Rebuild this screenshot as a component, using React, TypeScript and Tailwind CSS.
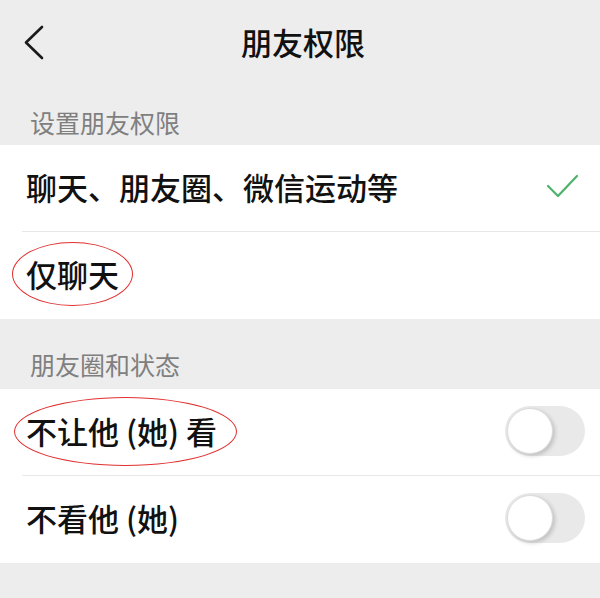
const font = {
  fontFamily: '"Noto Sans CJK SC", "Noto Sans", sans-serif',
};

function Toggle() {
  return (
    <div className="w-[80px] h-[50px] rounded-full bg-[#e9e9e9] p-[2px] flex items-center -mt-[3px]">
      <div className="w-[46px] h-[46px] rounded-full bg-white border border-[#dcdcdc] shadow-[2px_2px_4px_rgba(0,0,0,0.18)]" />
    </div>
  );
}

function Row({
  label,
  right,
  divider,
  circle,
}: {
  label: string;
  right?: React.ReactNode;
  divider?: boolean;
  circle?: string;
}) {
  return (
    <div className="relative h-[87px] flex items-center pl-[26px] pr-[15px]">
      <div className="relative -mt-[3px]">
        <span className="text-[31px] leading-[40px] font-medium text-[#111]">{label}</span>
        {circle && <div className={`absolute border-[1.5px] border-[#e0302f] rounded-[50%] ${circle}`} />}
      </div>
      <div className="ml-auto flex items-center">{right}</div>
      {divider && <div className="absolute bottom-0 left-[22px] right-0 h-px bg-[#e8e8e8]" />}
    </div>
  );
}

export default function App() {
  return (
    <div className="w-[600px] h-[598px] bg-[#ededed] overflow-hidden" style={font}>
      <div className="relative h-[86px] flex items-center justify-center">
        <svg className="absolute left-[22px] top-[24px]" width="26" height="38" viewBox="0 0 26 38">
          <polyline points="20,3 4,18.5 20,34" fill="none" stroke="#1a1a1a" strokeWidth="2.6" strokeLinecap="round" strokeLinejoin="round" />
        </svg>
        <span className="text-[31px] font-medium text-[#111] pl-[6px] -mt-[2px]">朋友权限</span>
      </div>

      <div className="h-[59px] pt-[21px] pl-[30px]">
        <span className="block text-[25px] leading-[30px] text-[#7f7f7f]">设置朋友权限</span>
      </div>

      <div className="bg-white">
        <Row
          label="聊天、朋友圈、微信运动等"
          divider
          right={
            <svg width="36" height="28" viewBox="0 0 36 28" className="mr-[4px] -mt-[3px]">
              <polyline points="3,13 13,23 32,3" fill="none" stroke="#4db36b" strokeWidth="2.2" strokeLinecap="round" strokeLinejoin="round" />
            </svg>
          }
        />
        <Row label="仅聊天" circle="-left-[14px] -right-[14px] -top-[12px] -bottom-[12px]" />
      </div>

      <div className="h-[70px] pt-[30px] pl-[30px]">
        <span className="block text-[25px] leading-[30px] text-[#7f7f7f]">朋友圈和状态</span>
      </div>

      <div className="bg-white">
        <Row label="不让他 (她) 看" divider right={<Toggle />} circle="-left-[12px] -right-[20px] -top-[14px] -bottom-[15px]" />
        <Row label="不看他 (她)" right={<Toggle />} />
      </div>
    </div>
  );
}
